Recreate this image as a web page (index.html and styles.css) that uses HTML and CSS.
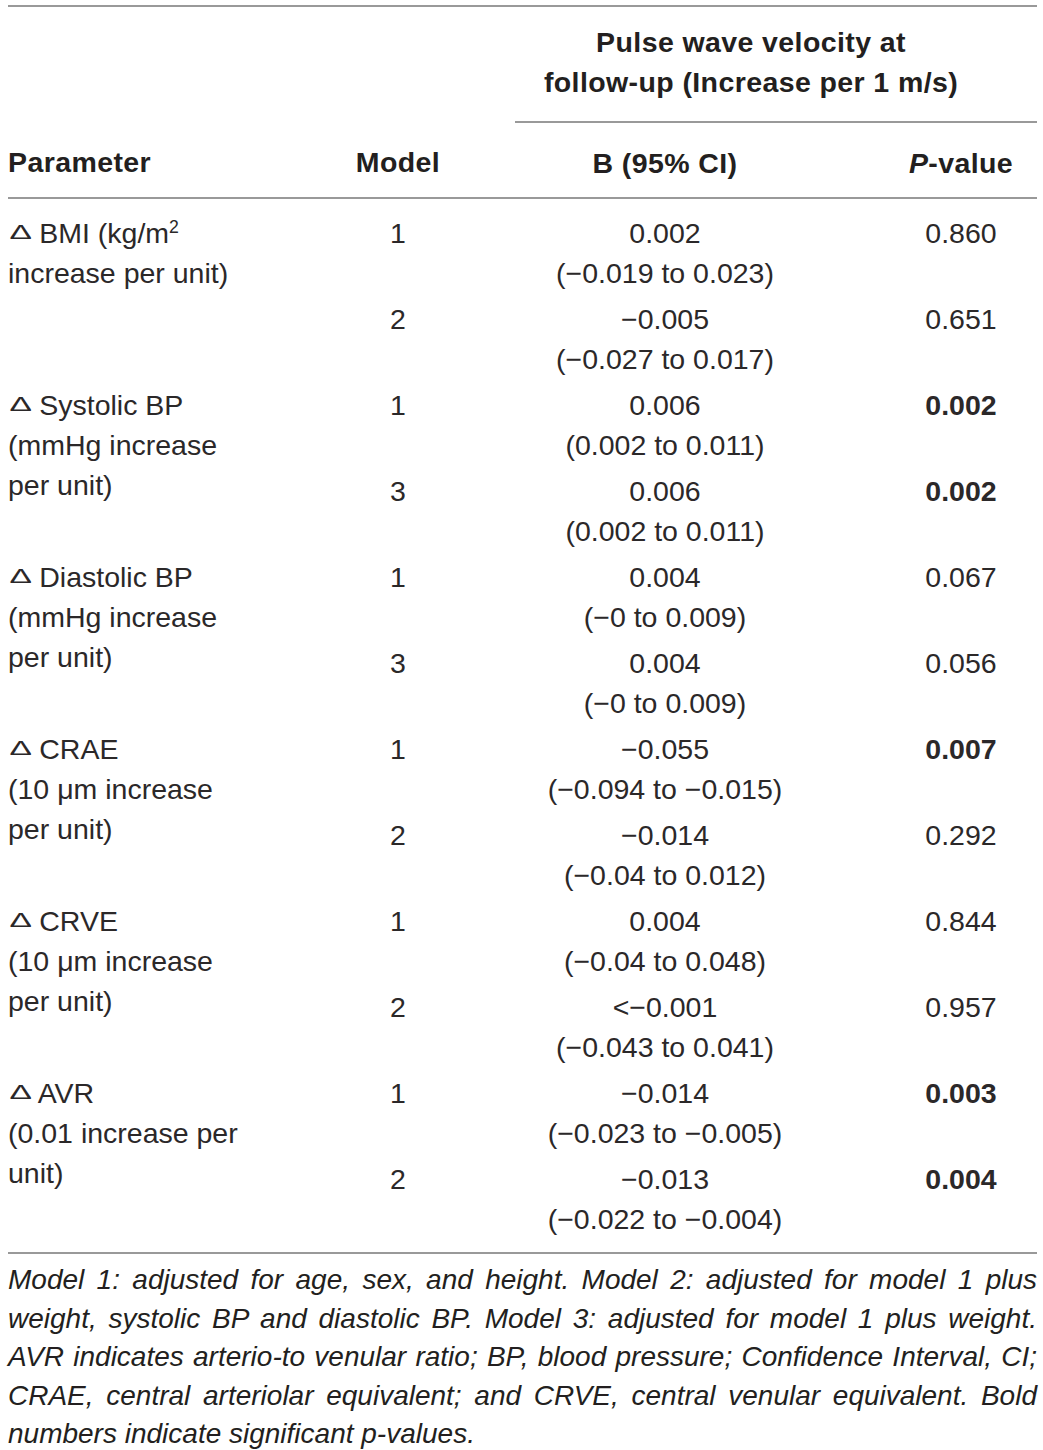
FILE: index.html
```html
<!DOCTYPE html>
<html lang="en">
<head>
  <meta charset="UTF-8" />
  <meta name="viewport" content="width=device-width, initial-scale=1.0"/>
  <title>Pulse wave velocity at follow-up</title>
  <link rel="stylesheet" href="styles.css">
</head>
<body>
<div class="table-wrap">
  <table class="pwv-table">
    <colgroup>
      <col class="col-param">
      <col class="col-model">
      <col class="col-b">
      <col class="col-p">
    </colgroup>
    <thead>
    <tr class="group-row">
      <th colspan="2"></th>
      <th colspan="2" class="group-head">Pulse wave velocity at<br>follow-up (Increase per 1 m/s)</th>
    </tr>
    <tr class="label-row">
      <th class="param">Parameter</th>
      <th class="model">Model</th>
      <th class="b-val">B (95% CI)</th>
      <th class="p-val"><i>P</i>-value</th>
    </tr>
    </thead>
    <tbody>
    <tr>
      <td class="param" rowspan="2"><span class="delta">Δ</span> BMI (kg/m<sup>2</sup><br>increase per unit)</td>
      <td class="model">1</td>
      <td class="b-val">0.002<br>(−0.019 to 0.023)</td>
      <td class="p-val">0.860</td>
    </tr>
    <tr>
      <td class="model">2</td>
      <td class="b-val">−0.005<br>(−0.027 to 0.017)</td>
      <td class="p-val">0.651</td>
    </tr>
    <tr>
      <td class="param" rowspan="2"><span class="delta">Δ</span> Systolic BP<br>(mmHg increase<br>per unit)</td>
      <td class="model">1</td>
      <td class="b-val">0.006<br>(0.002 to 0.011)</td>
      <td class="p-val"><b>0.002</b></td>
    </tr>
    <tr>
      <td class="model">3</td>
      <td class="b-val">0.006<br>(0.002 to 0.011)</td>
      <td class="p-val"><b>0.002</b></td>
    </tr>
    <tr>
      <td class="param" rowspan="2"><span class="delta">Δ</span> Diastolic BP<br>(mmHg increase<br>per unit)</td>
      <td class="model">1</td>
      <td class="b-val">0.004<br>(−0 to 0.009)</td>
      <td class="p-val">0.067</td>
    </tr>
    <tr>
      <td class="model">3</td>
      <td class="b-val">0.004<br>(−0 to 0.009)</td>
      <td class="p-val">0.056</td>
    </tr>
    <tr>
      <td class="param" rowspan="2"><span class="delta">Δ</span> CRAE<br>(10 <span class="mu">μ</span>m increase<br>per unit)</td>
      <td class="model">1</td>
      <td class="b-val">−0.055<br>(−0.094 to −0.015)</td>
      <td class="p-val"><b>0.007</b></td>
    </tr>
    <tr>
      <td class="model">2</td>
      <td class="b-val">−0.014<br>(−0.04 to 0.012)</td>
      <td class="p-val">0.292</td>
    </tr>
    <tr>
      <td class="param" rowspan="2"><span class="delta">Δ</span> CRVE<br>(10 <span class="mu">μ</span>m increase<br>per unit)</td>
      <td class="model">1</td>
      <td class="b-val">0.004<br>(−0.04 to 0.048)</td>
      <td class="p-val">0.844</td>
    </tr>
    <tr>
      <td class="model">2</td>
      <td class="b-val">&lt;−0.001<br>(−0.043 to 0.041)</td>
      <td class="p-val">0.957</td>
    </tr>
    <tr>
      <td class="param" rowspan="2"><span class="delta">Δ</span> AVR<br>(0.01 increase per<br>unit)</td>
      <td class="model">1</td>
      <td class="b-val">−0.014<br>(−0.023 to −0.005)</td>
      <td class="p-val"><b>0.003</b></td>
    </tr>
    <tr>
      <td class="model">2</td>
      <td class="b-val">−0.013<br>(−0.022 to −0.004)</td>
      <td class="p-val"><b>0.004</b></td>
    </tr>
    </tbody>
  </table>

  <p class="table-note">Model 1: adjusted for age, sex, and height. Model 2: adjusted for model 1 plus weight, systolic BP and diastolic BP. Model 3: adjusted for model 1 plus weight. AVR indicates arterio-to venular ratio; BP, blood pressure; Confidence Interval, CI; CRAE, central arteriolar equivalent; and CRVE, central venular equivalent. Bold numbers indicate significant p-values.</p>
</div>
</body>
</html>
```

FILE: styles.css
```css
body {
  margin: 0;
  background: #fff;
  color: #231f20;
  font-family: "Liberation Sans", Arial, sans-serif;
}

.table-wrap {
  width: 1029px;
  padding: 5px 0 0 8px;
}

.pwv-table {
  width: 1029px;
  table-layout: fixed;
  border-collapse: collapse;
  border-top: 2px solid #999;
  border-bottom: 2px solid #999;
  font-size: 28.5px;
  line-height: 40px;
}

.col-param { width: 292px; }
.col-model { width: 215px; }
.col-b { width: 300px; }
.col-p { width: 222px; }

th, td {
  padding: 0;
  white-space: nowrap;
  vertical-align: top;
}

th {
  font-weight: bold;
  letter-spacing: 0.4px;
}

.group-row th {
  padding-top: 15px;
  padding-bottom: 19px;
}

.group-head {
  text-align: center;
  padding-right: 50px;
  border-bottom: 2px solid #999;
}

.label-row th {
  padding-top: 20px;
  padding-bottom: 14px;
  border-bottom: 2px solid #999;
}

td {
  padding-top: 3px;
  padding-bottom: 3px;
  color: #2b2829;
}

tbody tr:first-child td {
  padding-top: 14px;
}

tbody tr:last-child td {
  padding-bottom: 13px;
}

.param {
  text-align: left;
}

.model {
  text-align: center;
  padding-right: 19px;
}

.b-val {
  text-align: center;
}

.p-val {
  text-align: center;
  padding-left: 70px;
}

.delta {
  display: inline-block;
  margin-left: 2px;
  font-size: 1.12em;
  line-height: 0;
  transform: scale(1.05, 0.66);
  transform-origin: 50% 100%;
  vertical-align: 0;
}

sup {
  font-size: 0.62em;
  line-height: 0;
  vertical-align: 0.55em;
}

.table-note {
  margin: 7px 0 0;
  font-size: 28px;
  line-height: 38.5px;
  font-style: italic;
  text-align: justify;
}
```
